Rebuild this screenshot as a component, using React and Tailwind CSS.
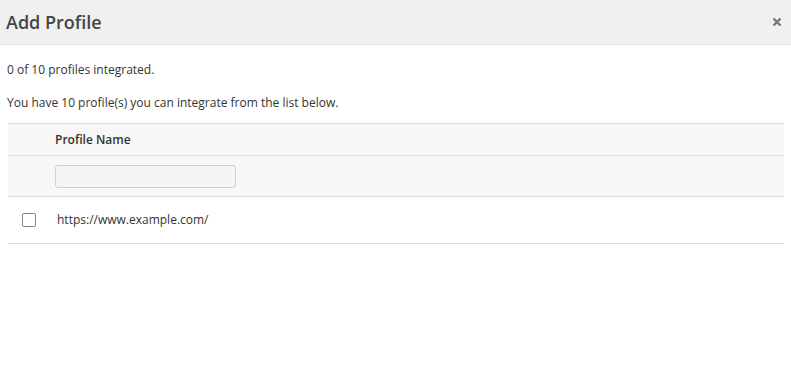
import React from "react";

export default function App() {
  return (
    <div
      className="w-[791px] h-[370px] bg-white text-[#333] text-[12px]"
      style={{ fontFamily: "'Open Sans', sans-serif" }}
    >
      {/* Header */}
      <div className="h-[45px] bg-[#f0f0f0] border-b border-[#e6e6e6] flex items-center justify-between pl-[6px] pr-[9px]">
        <h2 className="text-[18px] font-semibold text-[#444] leading-none">Add Profile</h2>
        <button className="text-[#777] leading-none">
          <svg width="10" height="10" viewBox="0 0 10 10">
            <path d="M1.5 1.5 L8.5 8.5 M8.5 1.5 L1.5 8.5" stroke="#777" strokeWidth="2.4" />
          </svg>
        </button>
      </div>

      {/* Body */}
      <div className="px-[8px] pt-[16px]">
        <p className="leading-[17px] -ml-[1px]">0 of 10 profiles integrated.</p>
        <p className="mt-[16px] leading-[17px] -ml-[1px]">
          You have 10 profile(s) you can integrate from the list below.
        </p>

        <table className="w-[776px] mt-[12px] border-collapse">
          <thead>
            <tr className="bg-[#f7f7f7] border-t border-[#dedede]">
              <th className="w-[47px] h-[32px]"></th>
              <th className="text-left font-semibold pl-0 h-[32px]">Profile Name</th>
            </tr>
            <tr className="bg-[#f7f7f7] border-t border-[#dedede]">
              <th className="h-[41px]"></th>
              <th className="text-left font-normal h-[41px]">
                <input
                  type="text"
                  className="block w-[181px] h-[23px] border border-[#cfcfcf] rounded-[3px] bg-[#f5f5f5] outline-none"
                />
              </th>
            </tr>
          </thead>
          <tbody>
            <tr className="border-t border-b border-[#dedede]">
              <td className="h-[47px] pl-[14px]">
                <span className="block w-[14px] h-[14px] border border-[#888] rounded-[2px] bg-white"></span>
              </td>
              <td className="pl-[2px]">https://www.example.com/</td>
            </tr>
          </tbody>
        </table>
      </div>
    </div>
  );
}
